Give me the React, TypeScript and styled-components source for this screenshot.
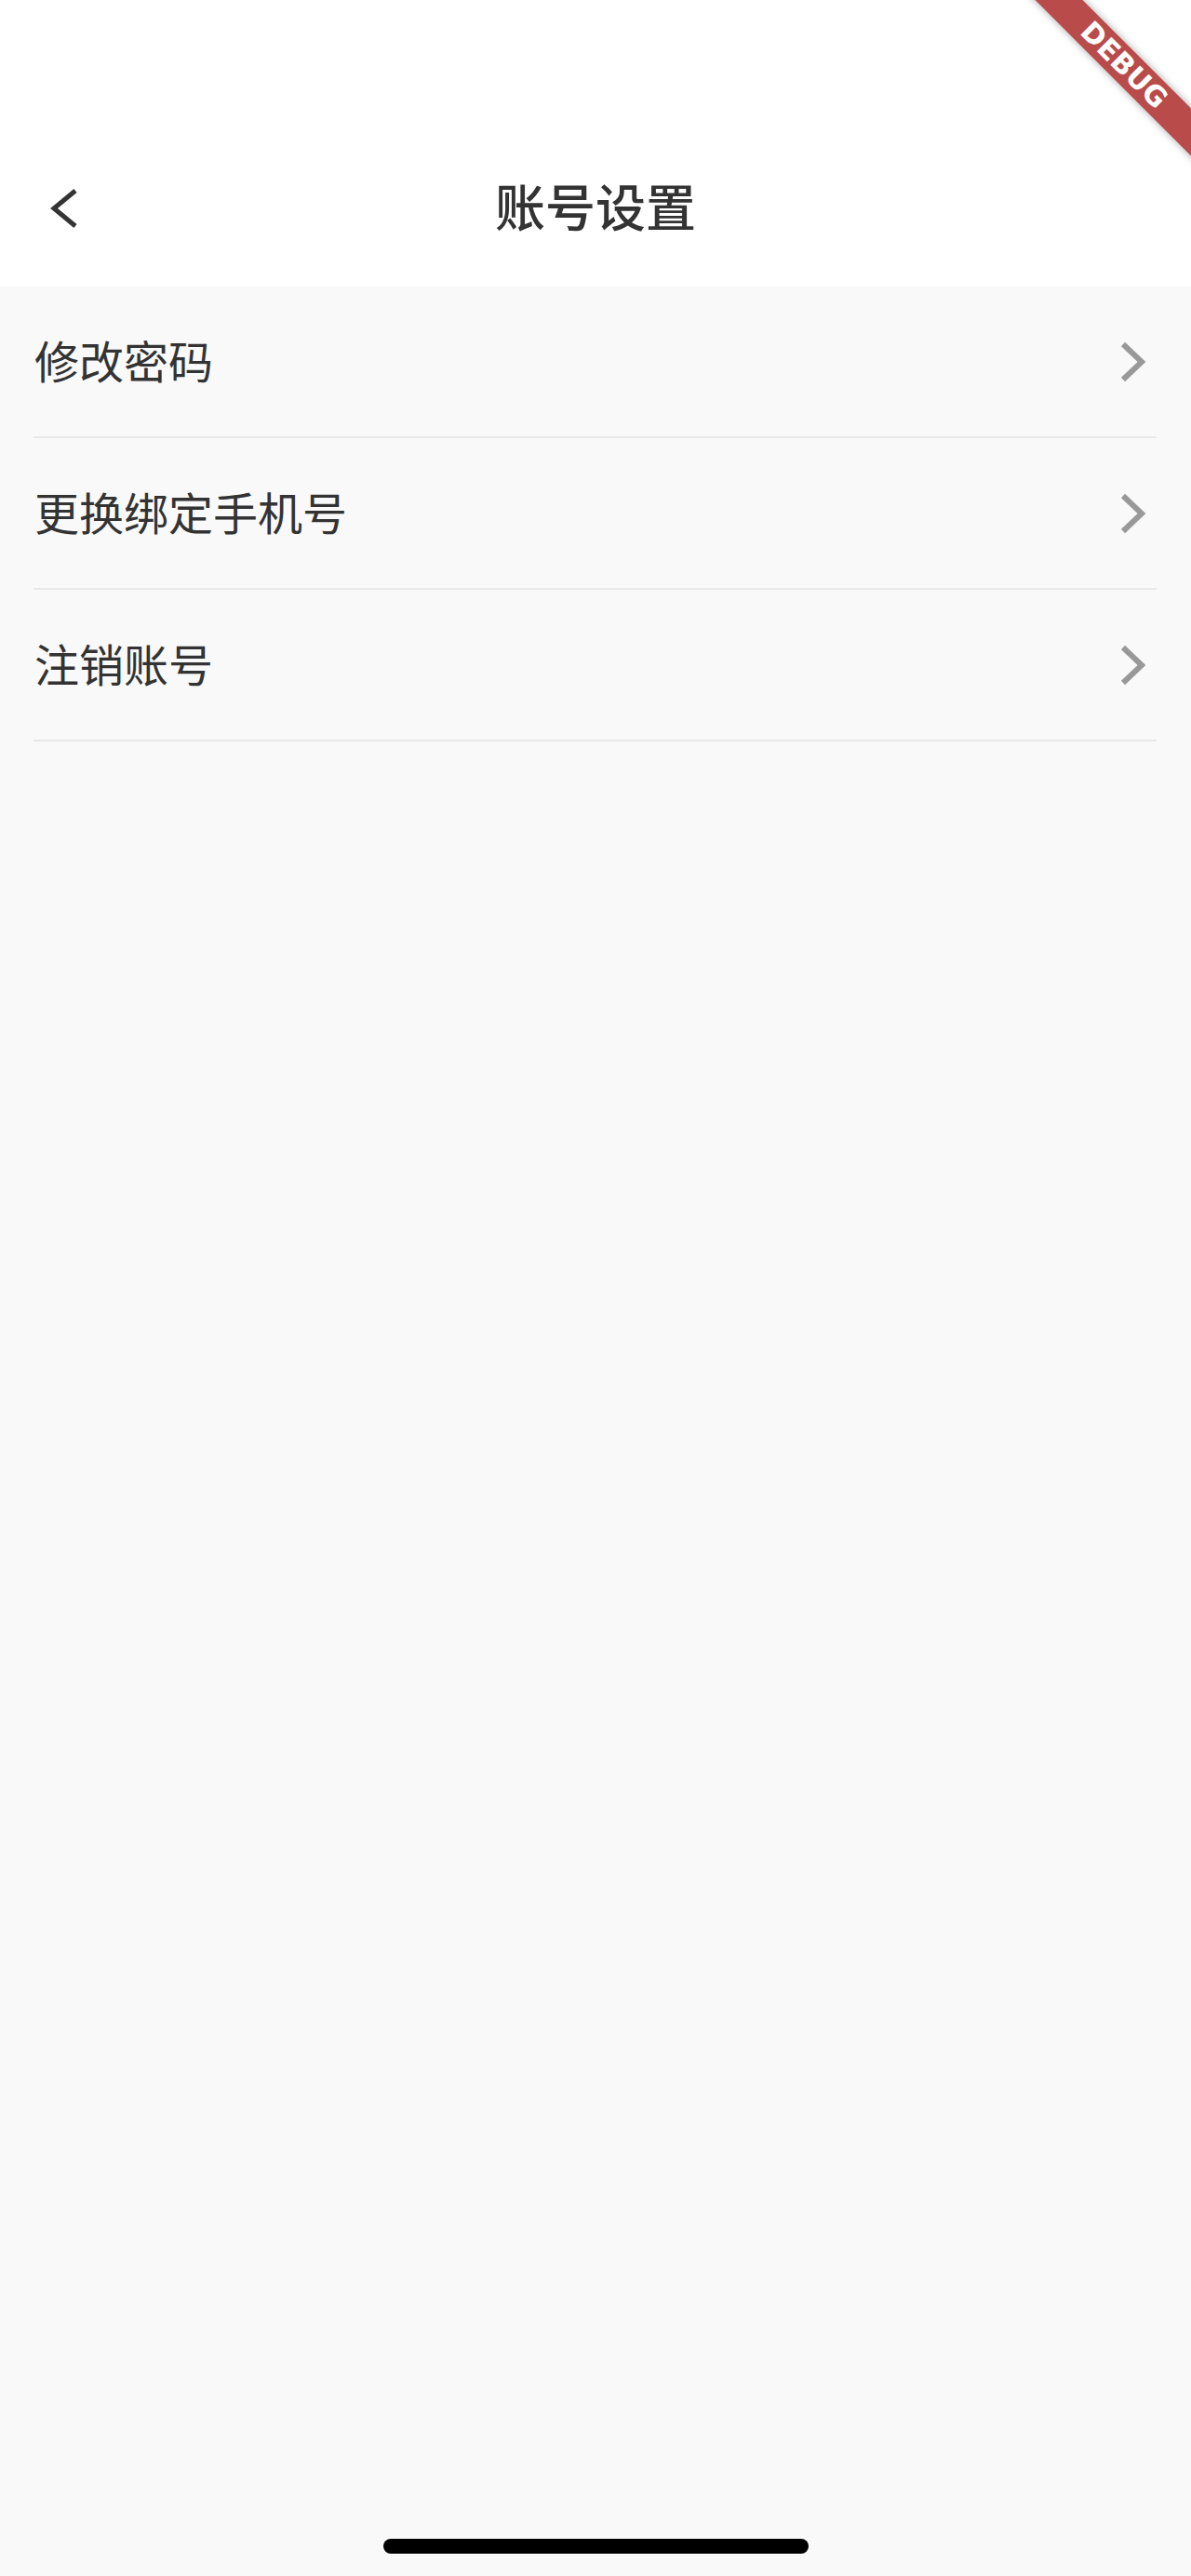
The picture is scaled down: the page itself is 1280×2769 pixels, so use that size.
import styled, { createGlobalStyle } from "styled-components";

const GlobalStyle = createGlobalStyle`
  html, body {
    margin: 0;
    padding: 0;
    background: #f9f9f9;
  }
  body {
    font-family: "Noto Sans CJK SC", "Noto Sans", sans-serif;
    -webkit-font-smoothing: antialiased;
  }
`;

const Screen = styled.div`
  position: relative;
  width: 1280px;
  height: 2769px;
  display: flex;
  flex-direction: column;
  overflow: hidden;
  background: #f9f9f9;
`;

const Header = styled.header`
  padding-top: 140px;
  background: #ffffff;
`;

const Toolbar = styled.div`
  height: 168px;
  display: grid;
  grid-template-columns: 1fr auto 1fr;
  align-items: center;
`;

const BackButton = styled.button`
  justify-self: start;
  display: flex;
  align-items: center;
  margin-left: 50px;
  padding: 0;
  border: 0;
  background: none;
  cursor: pointer;
`;

const Title = styled.h1`
  margin: 0;
  padding-bottom: 6px;
  font-size: 54px;
  font-weight: 500;
  line-height: 1;
  color: #333333;
`;

const List = styled.ul`
  margin: 0;
  padding: 0;
  list-style: none;
`;

const Row = styled.li`
  box-sizing: border-box;
  height: 163px;
  margin: 0 37px 0 36px;
  display: flex;
  align-items: center;
  justify-content: space-between;
  border-bottom: 2px solid #e8e8e8;
  cursor: pointer;
`;

const Label = styled.span`
  padding-left: 1px;
  padding-bottom: 6px;
  font-size: 48px;
  font-weight: 400;
  line-height: 1;
  color: #333333;
`;

const Chevron = styled.svg`
  margin-right: 10px;
  flex-shrink: 0;
`;

const Spacer = styled.div`
  flex: 1;
`;

const HomeArea = styled.div`
  display: flex;
  justify-content: center;
  padding-bottom: 24px;
`;

const HomeBar = styled.div`
  width: 457px;
  height: 16px;
  border-radius: 8px;
  background: #000000;
`;

const DebugBanner = styled.div`
  position: absolute;
  left: 1058px;
  top: 52px;
  width: 300px;
  height: 36px;
  display: flex;
  align-items: center;
  justify-content: center;
  transform: rotate(45deg);
  background: #b94b4b;
  box-shadow: 0 0 8px rgba(0, 0, 0, 0.35);
  color: #ffffff;
  font-family: "DejaVu Sans", "Liberation Sans", sans-serif;
  font-size: 30px;
  font-weight: 700;
  line-height: 1;
  pointer-events: none;
`;

const items = ["修改密码", "更换绑定手机号", "注销账号"];

export default function App() {
  return (
    <>
      <GlobalStyle />
      <Screen>
        <Header>
          <Toolbar>
            <BackButton aria-label="返回">
              <svg width="40" height="50" viewBox="0 0 40 50">
                <path
                  d="M31 6 L8 25 L31 44"
                  fill="none"
                  stroke="#333333"
                  strokeWidth="5"
                  strokeLinecap="butt"
                  strokeLinejoin="miter"
                />
              </svg>
            </BackButton>
            <Title>账号设置</Title>
            <div />
          </Toolbar>
        </Header>

        <List>
          {items.map((label) => (
            <Row key={label}>
              <Label>{label}</Label>
              <Chevron width="30" height="44" viewBox="0 0 30 44">
                <path
                  d="M4 3 L24 22 L4 41"
                  fill="none"
                  stroke="#999999"
                  strokeWidth="6"
                  strokeLinejoin="miter"
                />
              </Chevron>
            </Row>
          ))}
        </List>

        <Spacer />
        <HomeArea>
          <HomeBar />
        </HomeArea>

        <DebugBanner>DEBUG</DebugBanner>
      </Screen>
    </>
  );
}
